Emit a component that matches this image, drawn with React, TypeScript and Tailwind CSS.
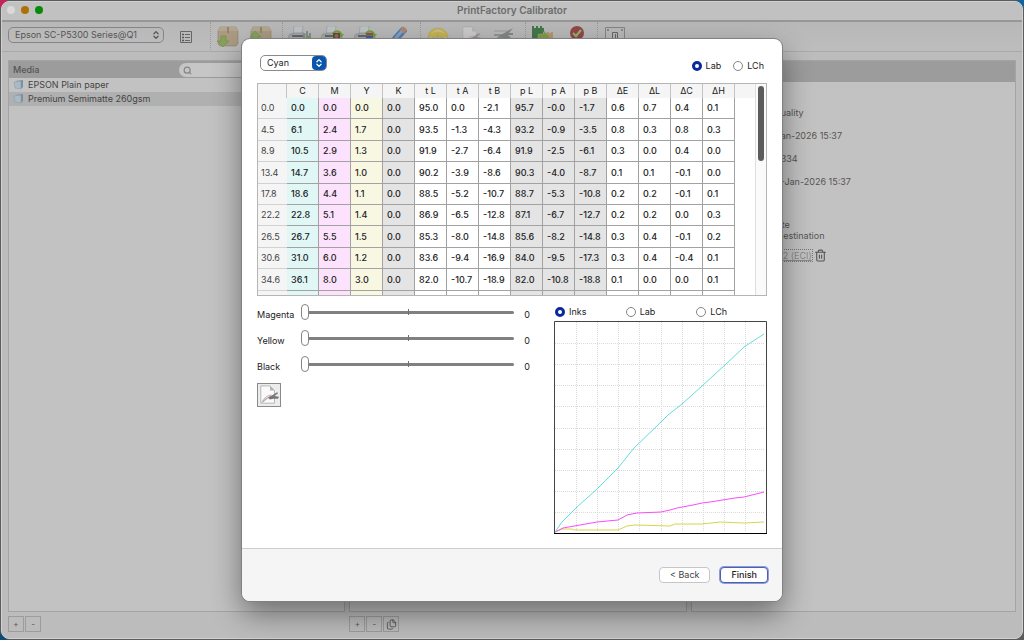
import { Search, Trash2, Files, ChevronsUpDown } from "lucide-react";

const columns = ["C", "M", "Y", "K", "t L", "t A", "t B", "p L", "p A", "p B", "ΔE", "ΔL", "ΔC", "ΔH"];

const rows = [
    ["0.0", "0.0", "0.0", "0.0", "0.0", "95.0", "0.0", "-2.1", "95.7", "-0.0", "-1.7", "0.6", "0.7", "0.4", "0.1"],
    ["4.5", "6.1", "2.4", "1.7", "0.0", "93.5", "-1.3", "-4.3", "93.2", "-0.9", "-3.5", "0.8", "0.3", "0.8", "0.3"],
    ["8.9", "10.5", "2.9", "1.3", "0.0", "91.9", "-2.7", "-6.4", "91.9", "-2.5", "-6.1", "0.3", "0.0", "0.4", "0.0"],
    ["13.4", "14.7", "3.6", "1.0", "0.0", "90.2", "-3.9", "-8.6", "90.3", "-4.0", "-8.7", "0.1", "0.1", "-0.1", "0.0"],
    ["17.8", "18.6", "4.4", "1.1", "0.0", "88.5", "-5.2", "-10.7", "88.7", "-5.3", "-10.8", "0.2", "0.2", "-0.1", "0.1"],
    ["22.2", "22.8", "5.1", "1.4", "0.0", "86.9", "-6.5", "-12.8", "87.1", "-6.7", "-12.7", "0.2", "0.2", "0.0", "0.3"],
    ["26.5", "26.7", "5.5", "1.5", "0.0", "85.3", "-8.0", "-14.8", "85.6", "-8.2", "-14.8", "0.3", "0.4", "-0.1", "0.2"],
    ["30.6", "31.0", "6.0", "1.2", "0.0", "83.6", "-9.4", "-16.9", "84.0", "-9.5", "-17.3", "0.3", "0.4", "-0.4", "0.1"],
    ["34.6", "36.1", "8.0", "3.0", "0.0", "82.0", "-10.7", "-18.9", "82.0", "-10.8", "-18.8", "0.1", "0.0", "0.0", "0.1"],
    ["", "", "", "", "", "", "", "", "", "", "", "", "", "", ""],
];

const cellColor = (i: number) => {
    if (i === 0) return "bg-[#e1f7f6]";
    if (i === 1) return "bg-[#fde2fd]";
    if (i === 2) return "bg-[#f8f8e2]";
    if (i === 3 || (i > 6 && i < 10)) return "bg-[#e4e4e4]";
    return "bg-white";
};

const gridLines = [22, 43, 64, 85, 107, 128, 149, 170, 191];

function Package({ up }: { up?: boolean }) {
    return (
        <svg width="22" height="22" viewBox="0 0 22 22">
            <path d="M1 5 3 1h16l2 4v13l-2 2H3l-2-2z" fill="#aa9b82" stroke="#8f826b" strokeWidth=".6" />
            <path d="M1 5 3 1h16l2 4z" fill="#b3a68e" />
            <path d="M10 1h2v6h-2z" fill="#94866c" />
            {up ? (
                <path d="m5 5 6 6H8v7H3v-7H0z" fill="#86a35c" stroke="#6f8f47" strokeWidth=".6" />
            ) : (
                <path d="M4 10h5v5h3l-6 6-6-6h4z" fill="#86a35c" stroke="#6f8f47" strokeWidth=".6" />
            )}
        </svg>
    );
}

function Printer({ kind }: { kind: number }) {
    return (
        <svg width="24" height="22" viewBox="0 0 24 22">
            <path d="M6 0h9l-1 10H5z" fill="#bfc3c6" stroke="#969a9d" strokeWidth=".6" />
            <path d="M2 8h3V7h11v1h3l2 3v7H0v-7z" fill="#a7aaac" stroke="#84888a" strokeWidth=".6" />
            <path d="M4 9h12v2H4z" fill="#67696a" />
            {kind === 0 && <path d="M15 8h2v8h-2zM18 5h2v9h-2zM21 7h2v8h-2z" fill="#8a8e90" />}
            {kind === 0 && <path d="M19 10h4v3h-4z" fill="#7b9d56" />}
            {kind > 0 && <path d="M11 8c1-5 9-5 10 0h2l-3 4-4-4h2c-1-2-4-2-4 0z" fill="#7a9c43" />}
            {kind === 1 && <rect x="12" y="7" width="7" height="8" fill="#585044" />}
            {kind === 1 && <circle cx="15.500" cy="10" r="2" fill="#ae6546" />}
            {kind === 2 && <path d="M12 7h7v2h-7z" fill="#a8484a" />}
            {kind === 2 && <path d="M12 9h7v1h-7z" fill="#4b8e58" />}
            {kind === 2 && <path d="M12 10h7v5h-7z" fill="#3e5fa3" />}
        </svg>
    );
}

function Pencil() {
    return (
        <svg width="20" height="22" viewBox="0 0 20 22">
            <path d="m1 17 3-6L13 1l5 4L9 15z" fill="#567fae" stroke="#456b98" strokeWidth=".6" />
            <path d="M11 3 13 1q3-1 5 3l-3 4z" fill="#b28670" />
            <path d="m5 12 7-8 2 2-7 8z" fill="#82a3c8" />
        </svg>
    );
}

function Gauge() {
    return (
        <svg width="22" height="22" viewBox="0 0 22 22">
            <path d="M1 12C1 -1 21 -1 21 12l-3-2-3 2-4-2-4 2-3-2z" fill="#c8b450" stroke="#bba43f" strokeWidth=".6" />
            <path d="M4 8c4-6 10-6 14 0-5-3-9-3-14 0z" fill="#c6bd90" />
            <path d="m11 6-1 12h2z" fill="#9b9b92" />
        </svg>
    );
}

function PageTool({ muted }: { muted?: boolean }) {
    return (
        <svg width="20" height="20" viewBox="0 0 22 22" opacity={muted ? 0.6 : 1}>
            <path d="M2 1h10l5 5v14H2z" fill={muted ? "#d8d8d8" : "#fafafa"} stroke="#a2a2a2" strokeWidth=".8" />
            <path d="M12 1v5h5z" fill="#b5b5b5" />
            <path d="M4 18Q8 11 14 11" fill="none" stroke="#dda0dd" strokeWidth="1.2" />
            <path d="M4 19Q9 13 15 13" fill="none" stroke="#8fcfd0" strokeWidth="1.2" />
            <path d="M3 19 13 12" stroke="#b3b36a" />
            <path d="m10 14 5-3 5-3 1 1-4 3 5 1-1 2h-5l-4 1z" fill="#777" />
        </svg>
    );
}

function Swatches() {
    return (
        <svg width="22" height="22" viewBox="0 0 22 22">
            <path d="M1 4h16v2H1z" fill="#aaa" />
            <path d="M1 8h12v2H1z" fill="#8f9a91" />
            <path d="m6 10 14-8-4 5h4v2h-5l3 3-8 1-9 2z" fill="#858685" />
            <path d="m1 13 7-3 2 2-9 4z" fill="#829487" />
        </svg>
    );
}

function Transfer() {
    return (
        <svg width="24" height="22" viewBox="0 0 24 22">
            <path d="M1 0h2v2h2V0h2v2h2V0h2v2h2v14H1z" fill="#44774b" />
            <path d="M12 6h2v1h2V6h2v1h2V6h2v14H12z" fill="#b8976f" />
            <path d="M7 8h6V5l6 6-6 6v-3H7z" fill="#7f9d50" stroke="#91aa6e" strokeWidth=".6" />
        </svg>
    );
}

function Approve() {
    return (
        <svg width="20" height="22" viewBox="0 0 20 22">
            <path d="m4 12-1 9 4-2 3 2 4-2 3 2-1-9z" fill="#823637" />
            <circle cx="11" cy="7" r="7" fill="#92474a" />
            <path d="m7 7 3 3 5-6" fill="none" stroke="#91b36a" strokeWidth="2.2" />
        </svg>
    );
}

function Plate() {
    return (
        <svg width="20" height="22" viewBox="0 0 20 22" fill="none" stroke="#858585">
            <path d="M.5 1.500h19v19H.5z" />
            <path d="M7.500 20V6.500h5V20M10.500 8v8" stroke="#666" />
            <path d="M2 4h2M16 4h2" stroke="#555" />
        </svg>
    );
}

function Folder() {
    return (
        <svg width="11" height="10" viewBox="0 0 11 10">
            <path d="m3 1 7-1v7L8 9z" fill="#7890a3" />
            <path d="m1 2 6-1 1 1v7L2 8z" fill="#a9bac5" stroke="#8799a5" strokeWidth=".5" />
        </svg>
    );
}

function ToolButton({ label, children }: { label: string; children: React.ReactNode }) {
    return (
        <button aria-label={label} className="flex w-[33px] shrink-0 justify-center">
            {children}
        </button>
    );
}

function Separator() {
    return <div className="-mt-1 h-7 w-1.5 shrink-0 border-r border-dotted border-[#9a9a9a]" />;
}

function SmallButton({ label, children }: { label: string; children: React.ReactNode }) {
    return (
        <button aria-label={label} className="flex h-4 w-4 items-center justify-center border border-[#9c9c9c] text-[8px] text-[#555]">
            {children}
        </button>
    );
}

function Radio({ name, label, checked }: { name: string; label: string; checked?: boolean }) {
    return (
        <label className="flex items-center gap-1 leading-[10px]">
            <input
                type="radio"
                name={name}
                defaultChecked={checked}
                className="size-[10px] appearance-none rounded-full border border-[#858585] bg-white checked:border-3 checked:border-[#0a2a9c]"
            />
            {label}
        </label>
    );
}

function InkSlider({ label }: { label: string }) {
    const id = `ink-${label}`;
    return (
        <div className="flex h-[26px] items-center">
            <label htmlFor={id} className="w-11 shrink-0 pt-1.5">{label}</label>
            <div className="relative flex min-w-0 flex-1 items-center">
                <span className="absolute left-1/2 h-[6px] w-px bg-[#707070]" />
                <input
                    id={id}
                    type="range"
                    min={0}
                    max={100}
                    defaultValue={0}
                    className="h-4 w-full appearance-none bg-transparent [&::-webkit-slider-runnable-track]:h-[3px] [&::-webkit-slider-runnable-track]:rounded-full [&::-webkit-slider-runnable-track]:bg-[#808080] [&::-webkit-slider-thumb]:-mt-[7px] [&::-webkit-slider-thumb]:h-4 [&::-webkit-slider-thumb]:w-2 [&::-webkit-slider-thumb]:appearance-none [&::-webkit-slider-thumb]:rounded-full [&::-webkit-slider-thumb]:border [&::-webkit-slider-thumb]:border-[#858585] [&::-webkit-slider-thumb]:bg-white"
                />
            </div>
            <output htmlFor={id} className="w-[26px] shrink-0 pt-1.5 text-center">0</output>
        </div>
    );
}

function InkChart() {
    return (
        <svg viewBox="0 0 213 213" className="block w-full" fill="none">
            <g stroke="#dadada" strokeDasharray="1 1">
                {gridLines.map((p) => (
                    <path key={p} d={`M${p + 0.5} 1V211M1 ${p + 0.5}H210`} />
                ))}
            </g>
            <path d="M1 211 8 208 18 208 20 209 64 209 73 205 81 204 116 205 121 203 148 203 166 201 190 202 210 201" stroke="#d6d64e" />
            <path d="M1 211 9 207 43 201 64 199 73 194 83 192 107 191 116 189 123 187 139 184 148 182 156 181 181 177 190 176 210 171" stroke="#f94df9" />
            <path d="M1 211 8 201 23 186 43 168 64 147 80 127 107 101 114 94 128 83 148 65 171 44 190 26 210 13" stroke="#66dcdc" />
            <path d="M.5 212.500V.5h212v212" stroke="#444" />
            <path d="M0 212.500h213" stroke="#000" />
        </svg>
    );
}

function CalibrationTable() {
    return (
        <div className="flex h-[213px] overflow-hidden border border-[#b5b5b5]">
            <div className="min-w-0 flex-1 overflow-hidden">
                <table className="h-[228px] w-full table-fixed border-separate border-spacing-0 text-left">
                    <thead>
                        <tr className="bg-[#f5f5f5]">
                            <th className="h-[14px] w-[29px] border-r border-[#c4c4c4] p-0" aria-label="Input" />
                            {columns.map((name) => (
                                <th key={name} className="w-8 border-r border-[#c4c4c4] p-0 text-center leading-[14px] font-normal">
                                    {name}
                                </th>
                            ))}
                            <th className="p-0" aria-label="Spare" />
                        </tr>
                    </thead>
                    <tbody>
                        {rows.map((row, r) => (
                            <tr key={r} className="h-[21px]">
                                <th className="border-b border-[#d2d2d2] bg-[#f5f5f5] p-0 pl-[3px] font-normal text-[#444]">{row[0]}</th>
                                {row.slice(1).map((value, i) => (
                                    <td key={i} className={`border-r border-b border-[#a2a2a2] p-0 pl-[4px] font-medium ${cellColor(i)}`}>
                                        {value}
                                    </td>
                                ))}
                                <td />
                            </tr>
                        ))}
                    </tbody>
                </table>
            </div>
            <div className="w-[11px] border-l border-[#dedede] bg-[#fafafa] px-0.5 pt-0.5">
                <div className="h-[75px] w-[6px] rounded-full bg-[#5c5c5c]" />
            </div>
        </div>
    );
}

function CalibrationDialog() {
    return (
        <div role="dialog" aria-label="Calibration" className="w-[540px] overflow-hidden rounded-lg bg-white text-[#222] shadow-[0_0_0_1px_#808080,0_12px_30px_rgba(0,0,0,0.45)]">
            <div className="px-[15px] pt-4 pb-3.5">
                <div className="flex items-end justify-between pr-[3px] pl-[3px]">
                    <div className="relative">
                        <select aria-label="Ink" className="block h-4 w-[67px] appearance-none rounded-[5px] border border-[#8a8a8a] bg-white pl-1.5">
                            <option>Cyan</option>
                        </select>
                        <span className="pointer-events-none absolute top-px right-px flex size-[14px] items-center justify-center rounded-[4px] bg-[#0a55ad] text-white">
                            <ChevronsUpDown size={10} strokeWidth={3} />
                        </span>
                    </div>
                    <div className="flex gap-3">
                        <Radio name="space" label="Lab" checked />
                        <Radio name="space" label="LCh" />
                    </div>
                </div>

                <div className="mt-3">
                    <CalibrationTable />
                </div>

                <div className="flex justify-between">
                    <div className="w-[283px] pt-[3px]">
                        <InkSlider label="Magenta" />
                        <InkSlider label="Yellow" />
                        <InkSlider label="Black" />
                        <button aria-label="Edit curves" className="mt-1.5 flex size-6 items-center justify-center border border-[#8a8a8a] bg-[#ececec]">
                            <PageTool />
                        </button>
                    </div>

                    <div className="w-[213px] pt-[11px]">
                        <div className="mb-1 grid grid-cols-3 pl-px">
                            <Radio name="plot" label="Inks" checked />
                            <Radio name="plot" label="Lab" />
                            <Radio name="plot" label="LCh" />
                        </div>
                        <InkChart />
                    </div>
                </div>
            </div>

            <div className="flex h-[53px] items-center justify-end gap-2.5 border-t border-[#cdcdcd] bg-[#f5f5f5] px-3.5">
                <button className="h-4 rounded-[4px] border border-[#c6c6c6] bg-white px-2.5 leading-3 text-[#444]">&lt; Back</button>
                <button className="h-4 rounded-[4px] border border-[#4a5fb5] bg-white px-2.5 leading-3 font-medium ring-1 ring-[#8c9bdc]">Finish</button>
            </div>
        </div>
    );
}

function MediaPanel() {
    return (
        <div className="flex flex-col">
            <div className="flex-1 border border-[#a4a4a4] bg-[#c2c2c2]">
                <div className="flex h-[17px] items-center justify-between bg-[#9c9c9c] pl-1 font-medium text-[#555]">
                    <span>Media</span>
                    <div className="relative w-1/2">
                        <Search size={9} strokeWidth={3} className="absolute top-[3px] left-1 text-[#858585]" />
                        <input aria-label="Search media" className="block h-[14px] w-full rounded-full bg-[#c6c6c6] pl-4" />
                    </div>
                </div>
                <ul className="text-[#444]">
                    <li className="flex h-[14px] items-center gap-1 pl-1">
                        <Folder /> EPSON Plain paper
                    </li>
                    <li className="flex h-[14px] items-center gap-1 bg-[#b0b0b0] pl-1">
                        <Folder /> Premium Semimatte 260gsm
                    </li>
                </ul>
            </div>
            <div className="mt-1 flex h-4 gap-px">
                <SmallButton label="Add media">+</SmallButton>
                <SmallButton label="Remove media">-</SmallButton>
            </div>
        </div>
    );
}

function DetailsPanel() {
    return (
        <div className="flex flex-col">
            <div className="flex-1 border border-[#a4a4a4] bg-[#c2c2c2]">
                <div className="h-[21px] bg-[#9c9c9c]" />
                <div className="pt-[25px] pl-[89px] leading-[11px] text-[#555]">
                    <div className="flex flex-col gap-3">
                        <p>uality</p>
                        <p>an-2026 15:37</p>
                        <p>334</p>
                        <p>-Jan-2026 15:37</p>
                    </div>
                    <div className="-ml-1 pt-8">
                        <p>ate</p>
                        <p>Destination</p>
                        <div className="mt-2 flex items-center gap-px">
                            <a href="#" className="border border-dotted border-[#777] text-[#888] underline">v2 (ECI)</a>
                            <button aria-label="Delete profile"><Trash2 size={13} strokeWidth={2} /></button>
                        </div>
                    </div>
                </div>
            </div>
            <div className="mt-1 h-4" />
        </div>
    );
}

export default function App() {
    return (
        <div className="relative flex min-h-screen flex-col bg-[#5c5c5c] bg-[radial-gradient(circle_at_top_left,#c02458_5px,transparent_10px),radial-gradient(circle_at_top_right,#12629e_5px,transparent_10px),radial-gradient(circle_at_bottom_left,#124a6e_5px,transparent_10px)] p-px font-['Inter',sans-serif] text-[9px]">
            <div className="flex flex-1 flex-col rounded-lg border border-[#d0d0d0] bg-[#bcbcbc]">
                <header className="flex h-5 items-center rounded-t-lg border-b-2 border-[#979797] bg-[#c1c1c1] px-[5px] pb-0.5">
                    <div className="flex w-20 gap-1.5">
                        <span className="size-2 rounded-full bg-[#d9d9d9]" />
                        <span className="size-2 rounded-full bg-[#b07008]" />
                        <span className="size-2 rounded-full bg-[#078a0a]" />
                    </div>
                    <h1 className="flex-1 text-center text-[10px] font-semibold text-[#6c6c6c]">PrintFactory Calibrator</h1>
                    <div className="w-20" />
                </header>

                <div className="flex h-[30px] border-b border-[#a9a9a9] bg-linear-to-b from-[#b8b8b8] to-[#bdbdbd] pl-1.5">
                    <div className="relative mt-[5px]">
                        <select aria-label="Printer" className="block h-4 w-[156px] appearance-none rounded-[5px] border border-[#858585] bg-transparent pl-1.5 text-[#555]">
                            <option>Epson SC-P5300 Series@Q1</option>
                        </select>
                        <ChevronsUpDown size={10} strokeWidth={3} className="pointer-events-none absolute top-[3px] right-[3px] text-[#555]" />
                    </div>
                    <button aria-label="Properties" className="ml-4 flex items-center">
                        <svg width="12" height="12" viewBox="0 0 12 12" fill="none" stroke="#666">
                            <path d="M.5.5h11v11H.5zM5 3.500h5M5 6.500h5M5 9.500h5" />
                            <path d="M2 3.500h2M2 6.500h2M2 9.500h2" stroke="#555" strokeWidth="1.6" />
                        </svg>
                    </button>
                    <div className="ml-[13px] flex pt-1">
                        <Separator />
                        <ToolButton label="Import"><Package /></ToolButton>
                        <ToolButton label="Export"><Package up /></ToolButton>
                        <Separator />
                        <ToolButton label="Print chart"><Printer kind={0} /></ToolButton>
                        <ToolButton label="Measure chart"><Printer kind={1} /></ToolButton>
                        <ToolButton label="Print profile"><Printer kind={2} /></ToolButton>
                        <ToolButton label="Edit"><Pencil /></ToolButton>
                        <Separator />
                        <ToolButton label="Ink limit"><Gauge /></ToolButton>
                        <ToolButton label="Linearize"><PageTool muted /></ToolButton>
                        <ToolButton label="Gray balance"><Swatches /></ToolButton>
                        <Separator />
                        <ToolButton label="Transfer"><Transfer /></ToolButton>
                        <ToolButton label="Approve"><Approve /></ToolButton>
                        <Separator />
                        <ToolButton label="Device"><Plate /></ToolButton>
                    </div>
                </div>

                <main className="grid flex-1 grid-cols-[337fr_337fr_325fr] gap-1 px-1.5 pt-2 pb-1.5">
                    <MediaPanel />
                    <div className="flex flex-col">
                        <div className="flex-1 border border-[#a4a4a4] bg-[#c2c2c2]">
                            <div className="h-[17px] bg-[#9c9c9c]" />
                        </div>
                        <div className="mt-1 flex h-4 gap-px">
                            <SmallButton label="Add calibration">+</SmallButton>
                            <SmallButton label="Remove calibration">-</SmallButton>
                            <SmallButton label="Duplicate calibration"><Files size={11} strokeWidth={2} /></SmallButton>
                        </div>
                    </div>
                    <DetailsPanel />
                </main>
            </div>

            {/* Calibration sheet */}
            <div className="absolute inset-0 flex items-start justify-center pt-[39px]">
                <CalibrationDialog />
            </div>
        </div>
    );
}
